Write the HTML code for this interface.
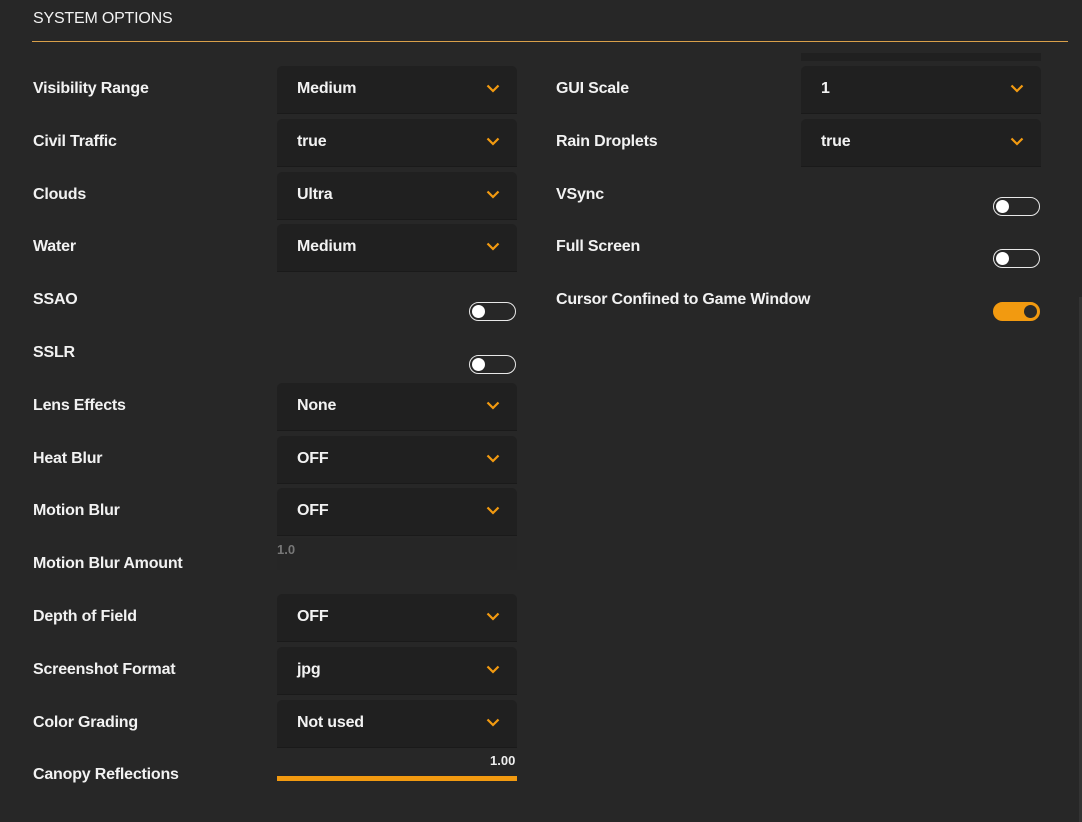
<!DOCTYPE html>
<html><head><style>
body{margin:0;width:1082px;height:822px;background:#272727;font-family:"Liberation Sans",sans-serif;color:#fff;position:relative;overflow:hidden}
.a{position:absolute}
.t{font-size:16px;font-weight:bold;color:#f2f2f2;letter-spacing:-0.2px}
.dd{position:absolute;width:240px;height:47px;background:#202020;border-radius:5px 5px 0 0;border-bottom:1px solid #1a1a1a}
.dd span{position:absolute;left:20px;top:14px;font-size:16px;font-weight:bold;color:#f2f2f2;letter-spacing:-0.2px}
.dd svg{position:absolute;right:17px;top:18px}
.tg{position:absolute;width:45px;height:17px;border:1.5px solid #e8e8e8;border-radius:10px}
.tg::after{content:"";position:absolute;left:2px;top:2px;width:13px;height:13px;border-radius:50%;background:#fff}
.on{background:#f29a10;border-color:#f29a10}
.on::after{left:auto;right:2px;background:#2a2a2a}
</style></head><body>
<div class="a t" style="left:33px;top:10px;font-weight:normal;font-size:16px">SYSTEM OPTIONS</div>
<div class="a" style="left:32px;top:41px;width:1036px;height:1px;background:#d9a04a"></div>
<div class="a" style="left:801px;top:53px;width:240px;height:8px;background:#202020"></div>
<div class="a" style="left:1079px;top:297px;width:3px;height:525px;background:#333"></div>
<div id="c"></div>
<div class="a" style="left:277px;top:538px;width:240px;height:32px;background:#262626"></div>
<div class="a" style="left:277px;top:542px;font-size:13px;color:#777;font-weight:bold">1.0</div>
<div class="a" style="left:490px;top:753px;font-size:13px;font-weight:bold;color:#eee">1.00</div>
<div class="a" style="left:277px;top:776px;width:240px;height:5px;background:#f29a10"></div>
<script>
var chev='<svg width="14" height="9" viewBox="0 0 14 9"><path d="M1.5 1.5L7 7L12.5 1.5" stroke="#f29a10" stroke-width="2.2" fill="none"/></svg>';
var L=[["Visibility Range","d","Medium"],["Civil Traffic","d","true"],["Clouds","d","Ultra"],["Water","d","Medium"],["SSAO","t"],["SSLR","t"],["Lens Effects","d","None"],["Heat Blur","d","OFF"],["Motion Blur","d","OFF"],["Motion Blur Amount","n"],["Depth of Field","d","OFF"],["Screenshot Format","d","jpg"],["Color Grading","d","Not used"],["Canopy Reflections","n"]];
var R=[["GUI Scale","d","1"],["Rain Droplets","d","true"],["VSync","t"],["Full Screen","t"],["Cursor Confined to Game Window","o"]];
var h='';
function row(it,i,lx,cx){var y=80+i*52.8;
h+='<div class="a t" style="left:'+lx+'px;top:'+y+'px">'+it[0]+'</div>';
if(it[1]=="d")h+='<div class="dd" style="left:'+cx+'px;top:'+(y-14)+'px"><span>'+it[2]+'</span>'+chev+'</div>';
if(it[1]=="t"||it[1]=="o")h+='<div class="tg'+(it[1]=="o"?' on':'')+'" style="left:'+(cx+192)+'px;top:'+(y+11)+'px"></div>';}
L.forEach(function(it,i){row(it,i,33,277)});
R.forEach(function(it,i){row(it,i,556,801)});
document.getElementById('c').innerHTML=h;
</script>
</body></html>
